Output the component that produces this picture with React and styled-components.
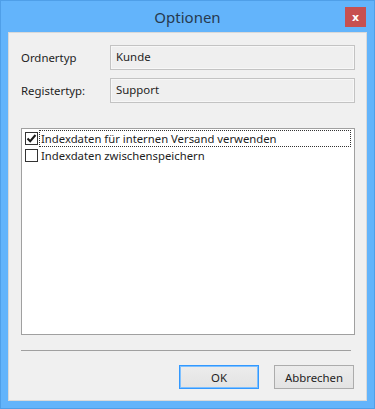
import React, { useState } from 'react';
import styled, { createGlobalStyle } from 'styled-components';

const GlobalStyle = createGlobalStyle`
  html, body {
    margin: 0;
    padding: 0;
    background: #ffffff;
  }
  body {
    font-family: 'Noto Sans', 'Open Sans', sans-serif;
  }
`;

const Frame = styled.div`
  width: 375px;
  height: 409px;
  box-sizing: border-box;
  background: #63b4fb;
  border: 1px solid #4f9fe8;
  display: flex;
  flex-direction: column;
  padding: 0 7px 7px 7px;
`;

const TitleBar = styled.div`
  height: 31px;
  position: relative;
  display: flex;
  align-items: center;
  justify-content: center;
`;

const Title = styled.div`
  font-family: 'Noto Sans', sans-serif;
  font-size: 15px;
  color: #273a4f;
  margin-top: 1px;
`;

const CloseButton = styled.div`
  position: absolute;
  right: 1px;
  top: 6px;
  width: 21px;
  height: 20px;
  background: #c75050;
  color: #ffffff;
  font-family: 'DejaVu Sans', sans-serif;
  font-size: 11px;
  font-weight: bold;
  display: flex;
  align-items: center;
  justify-content: center;
`;

const Client = styled.div`
  flex: 1;
  background: #f0f0f0;
  border: 1px solid #d9d9d9;
  display: flex;
  flex-direction: column;
  padding: 12px 11px 10px 12px;
`;

const FieldGrid = styled.div`
  display: grid;
  grid-template-columns: 89px 245px;
  row-gap: 8px;
  align-items: center;
`;

const Label = styled.div`
  font-size: 11.4px;
  color: #1e1e1e;
`;

const ReadOnlyBox = styled.div`
  height: 25px;
  box-sizing: border-box;
  border: 1px solid #c3c3c3;
  box-shadow: inset 0 0 0 1px #f7f7f7;
  background: #efefef;
  font-size: 11.4px;
  color: #1e1e1e;
  padding: 3px 5px;
`;

const ListBox = styled.div`
  margin-top: 25px;
  height: 207px;
  box-sizing: border-box;
  border: 1px solid #a0a0a0;
  background: #ffffff;
  padding: 1px 3px;
  margin-right: 0;
`;

const Item = styled.label`
  display: flex;
  align-items: center;
  height: 17px;
  cursor: default;
`;

const Box = styled.span`
  width: 13px;
  height: 13px;
  box-sizing: border-box;
  border: 1px solid #333333;
  background: #ffffff;
  display: flex;
  align-items: center;
  justify-content: center;
  flex-shrink: 0;
`;

const ItemText = styled.span`
  flex: 1;
  font-size: 11.3px;
  color: #1e1e1e;
  margin-left: 1px;
  padding: 0 1px;
  height: 17px;
  line-height: 16px;
  box-sizing: border-box;
  border: 1px dotted ${({ focused }) => (focused ? '#333333' : 'transparent')};
`;

const Separator = styled.div`
  margin-top: 15px;
  height: 1px;
  background: #a0a0a0;
  margin-right: 4px;
`;

const ButtonRow = styled.div`
  display: flex;
  justify-content: flex-end;
  gap: 15px;
  margin-top: 14px;
  margin-right: 1px;
`;

const Button = styled.button`
  width: ${({ w }) => w}px;
  height: 24px;
  box-sizing: border-box;
  background: linear-gradient(#ececec, #e3e3e3);
  border: 1px solid ${({ primary }) => (primary ? '#3399ff' : '#acacac')};
  box-shadow: ${({ primary }) => (primary ? 'inset 0 0 0 1px #7ec0ff' : 'none')};
  font-family: 'Noto Sans', sans-serif;
  font-size: 11.4px;
  color: #1e1e1e;
  padding: 0;
`;

const CheckMark = () => (
  <svg width="11" height="11" viewBox="0 0 11 11">
    <path d="M1.5 5.5 L4.2 8.2 L9.5 2" fill="none" stroke="#1a1a1a" strokeWidth="2" />
  </svg>
);

const items = [
  { label: 'Indexdaten für internen Versand verwenden', checked: true },
  { label: 'Indexdaten zwischenspeichern', checked: false },
];

export default function App() {
  const [state, setState] = useState(items.map((i) => i.checked));

  const toggle = (idx) => {
    setState(state.map((v, i) => (i === idx ? !v : v)));
  };

  return (
    <>
      <GlobalStyle />
      <Frame>
        <TitleBar>
          <Title>Optionen</Title>
          <CloseButton>x</CloseButton>
        </TitleBar>
        <Client>
          <FieldGrid>
            <Label>Ordnertyp</Label>
            <ReadOnlyBox>Kunde</ReadOnlyBox>
            <Label>Registertyp:</Label>
            <ReadOnlyBox>Support</ReadOnlyBox>
          </FieldGrid>
          <ListBox>
            {items.map((item, idx) => (
              <Item key={item.label} onClick={() => toggle(idx)}>
                <Box>{state[idx] && <CheckMark />}</Box>
                <ItemText focused={idx === 0}>{item.label}</ItemText>
              </Item>
            ))}
          </ListBox>
          <Separator />
          <ButtonRow>
            <Button primary w={80}>OK</Button>
            <Button w={80}>Abbrechen</Button>
          </ButtonRow>
        </Client>
      </Frame>
    </>
  );
}
